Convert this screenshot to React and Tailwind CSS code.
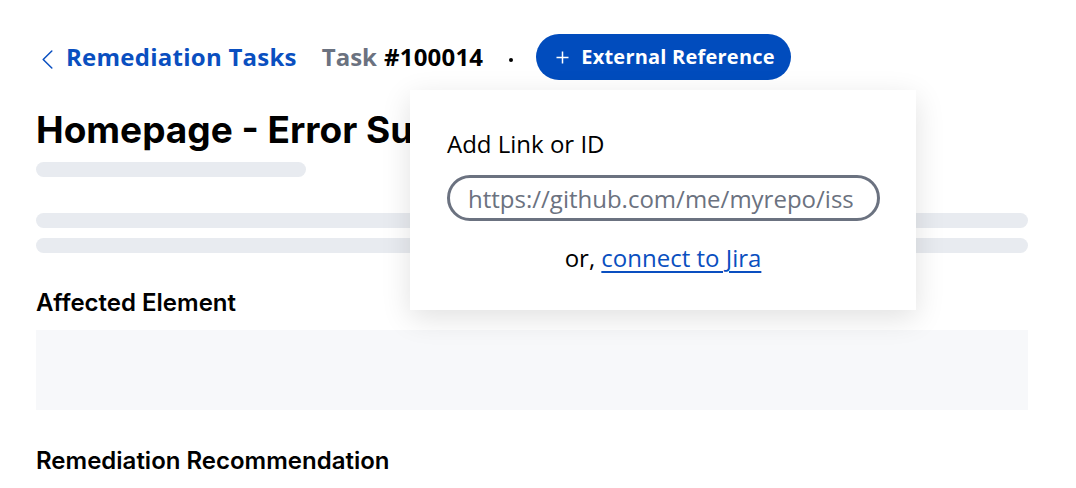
import React from "react";

export default function App() {
  const os = { fontFamily: '"Open Sans", sans-serif' };
  const inter = { fontFamily: 'Inter, sans-serif' };
  return (
    <div className="relative w-[1076px] h-[488px] overflow-hidden bg-white">
      <div className="pl-9 pr-12 pt-[34px]">
        <div className="flex items-center h-[46px]" style={os}>
          <svg width="11" height="19" viewBox="0 0 11 19" className="ml-[6px] mt-[5px]">
            <polyline points="9.8,1 1.2,9.5 9.8,18" fill="none" stroke="#0a4fc0" strokeWidth="1.5" strokeLinecap="round" strokeLinejoin="round" />
          </svg>
          <span className="ml-[13px] text-[24px] font-bold text-[#0a4fc0] tracking-[0.25px]">Remediation Tasks</span>
          <span className="ml-[25px] text-[24px] font-bold text-[#6b7280]">Task</span>
          <span className="ml-[7px] text-[24px] font-bold text-black tracking-[0.2px]">#100014</span>
          <span className="ml-[26px] w-[4px] h-[4px] rounded-full bg-black mt-[5px]"></span>
          <button className="ml-[23px] h-[46px] rounded-full bg-[#014cbd] text-white flex items-center pl-[20px] pr-[16px]" style={os}>
            <svg width="13" height="13" viewBox="0 0 13 13">
              <path d="M6.5 0.5v12M0.5 6.5h12" stroke="white" strokeWidth="1.5" />
            </svg>
            <span className="ml-[12px] text-[20px] font-bold tracking-[0.22px]">External Reference</span>
          </button>
        </div>
        <h1 className="mt-[28px] text-[37px] font-bold text-black leading-[44px] whitespace-nowrap" style={inter}>Homepage - Error Summary</h1>
        <div className="mt-[10px] w-[270px] h-[15px] rounded-full bg-[#e8ebf0]"></div>
        <div className="mt-[36px] w-[992px] h-[15px] rounded-full bg-[#e8ebf0]"></div>
        <div className="mt-[10px] w-[992px] h-[15px] rounded-full bg-[#e8ebf0]"></div>
        <h2 className="mt-[34px] text-[24px] font-semibold text-black leading-[32px]" style={inter}>Affected Element</h2>
        <div className="mt-[11px] w-[992px] h-[80px] bg-[#f7f8fa]"></div>
        <h2 className="mt-[35px] text-[24px] font-semibold text-black leading-[32px]" style={inter}>Remediation Recommendation</h2>
      </div>
      <div className="absolute left-[410px] top-[90px] w-[506px] h-[220px] bg-white shadow-[0_8px_28px_rgba(0,0,0,0.12)] px-[37px] pt-[38px]" style={os}>
        <div className="text-[24px] text-black leading-[32px]">Add Link or ID</div>
        <input
          type="text"
          placeholder="https://github.com/me/myrepo/issues/1"
          className="mt-[15px] block w-[433px] h-[46px] rounded-full border-[3px] border-[#6b7280] pl-[18px] pr-[24px] text-[24px] text-black placeholder:text-[#6b7280] outline-none"
          style={os}
        />
        <div className="mt-[21px] text-center text-[24px] text-black leading-[32px]">
          or, <span className="text-[#0a4fc0] underline underline-offset-[4px] decoration-[1.5px]">connect to Jira</span>
        </div>
      </div>
    </div>
  );
}
